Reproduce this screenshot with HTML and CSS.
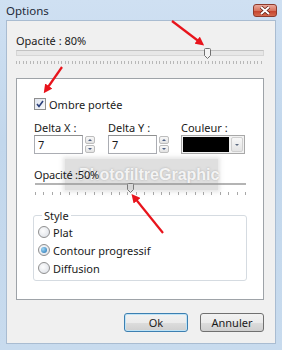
FILE: index.html
```html
<!DOCTYPE html>
<html lang="fr">
<head>
    <meta charset="UTF-8">
    <title>Options</title>
    <link rel="stylesheet" href="styles.css">
</head>
<body>
    <div class="window">
        <div class="titlebar">
            <span class="title">Options</span>
            <div class="close">
                <svg width="12" height="9" viewBox="0 0 12 9"><path d="M2 1 L10 8 M10 1 L2 8" stroke="#5a1a10" stroke-width="3.4"/><path d="M2 1 L10 8 M10 1 L2 8" stroke="#fff" stroke-width="2"/></svg>
            </div>
        </div>

        <div class="client">
            <div class="label">Opacité : 80%</div>
            <div class="slider big">
                <div class="track"></div>
                <div class="ticks"></div>
                <svg class="thumb" width="7" height="11" viewBox="0 0 7 11"><path d="M0.5 1.5 Q0.5 0.5 1.5 0.5 H5.5 Q6.5 0.5 6.5 1.5 V7.5 L3.5 10.5 L0.5 7.5 Z" fill="#f4f4f4" stroke="#707070"/></svg>
            </div>

            <div class="panel">
                <label class="check">
                    <span class="box"><svg width="8" height="8" viewBox="0 0 8 8"><path d="M1 4 L3 6.5 L7 1" fill="none" stroke="#2a3f7a" stroke-width="1.6"/></svg></span>
                    Ombre portée
                </label>

                <div class="fields">
                    <div class="field">
                        <div class="flabel">Delta X :</div>
                        <div class="spin">
                            <div class="input">7</div>
                            <div class="arrows">
                                <span class="arr up"></span>
                                <span class="arr down"></span>
                            </div>
                        </div>
                    </div>
                    <div class="field">
                        <div class="flabel">Delta Y :</div>
                        <div class="spin">
                            <div class="input">7</div>
                            <div class="arrows">
                                <span class="arr up"></span>
                                <span class="arr down"></span>
                            </div>
                        </div>
                    </div>
                    <div class="field">
                        <div class="flabel">Couleur :</div>
                        <div class="combo">
                            <span class="swatch"></span>
                            <span class="drop"></span>
                        </div>
                    </div>
                </div>

                <div class="label small">Opacité :50%</div>
                <div class="slider thin">
                    <div class="track"></div>
                    <div class="ticks"></div>
                    <svg class="thumb" width="7" height="10" viewBox="0 0 7 10"><path d="M0.5 1.5 Q0.5 0.5 1.5 0.5 H5.5 Q6.5 0.5 6.5 1.5 V6.5 L3.5 9.5 L0.5 6.5 Z" fill="#f4f4f4" stroke="#707070"/></svg>
                </div>

                <fieldset class="group">
                    <legend>Style</legend>
                    <div class="radio"><span class="dot"></span>Plat</div>
                    <div class="radio"><span class="dot on"></span>Contour progressif</div>
                    <div class="radio"><span class="dot"></span>Diffusion</div>
                </fieldset>
            </div>

            <div class="buttons">
                <div class="btn default">Ok</div>
                <div class="btn">Annuler</div>
            </div>
        </div>

        <div class="watermark">PhotofiltreGraphic</div>

        <svg class="arrows-overlay" width="282" height="350" viewBox="0 0 282 350">
            <defs>
                <marker id="head" markerWidth="4" markerHeight="4" refX="2.2" refY="2" orient="auto">
                    <path d="M0 0 L4 2 L0 4 Z" fill="#e8141c"/>
                </marker>
            </defs>
            <line x1="172" y1="21" x2="201" y2="43" stroke="#e8141c" stroke-width="2.2" marker-end="url(#head)"/>
            <line x1="62" y1="67" x2="46" y2="90" stroke="#e8141c" stroke-width="2.2" marker-end="url(#head)"/>
            <line x1="163" y1="233" x2="134" y2="197" stroke="#e8141c" stroke-width="2.2" marker-end="url(#head)"/>
        </svg>
    </div>
</body>
</html>
```

FILE: styles.css
```css
body {
    margin: 0;
    font-family: "Noto Sans", "DejaVu Sans", sans-serif;
    font-size: 11px;
    color: #1a1a1a;
}
.window {
    position: relative;
    width: 282px;
    height: 350px;
    display: flex;
    flex-direction: column;
    background: linear-gradient(#cfe0f2, #c2d7ec 40%, #c8dbee);
    overflow: hidden;
}
.titlebar {
    height: 20px;
    display: flex;
    align-items: center;
    justify-content: space-between;
    padding: 0 5px 0 6px;
}
.title {
    font-size: 11.5px;
    color: #1e2a38;
}
.close {
    width: 24px;
    height: 13px;
    box-sizing: border-box;
    border: 1px solid #8c3a2c;
    border-radius: 3px;
    background: linear-gradient(#eaa99c, #d8755f 50%, #c4402a 51%, #d46a4e);
    display: flex;
    align-items: center;
    justify-content: center;
}
.client {
    flex: 1;
    margin: 0 6px 6px;
    background: #f0f0f0;
    border: 1px solid #a9bcd1;
    padding: 12px 11px 0 9px;
    display: flex;
    flex-direction: column;
}
.label {
    height: 15px;
    line-height: 15px;
}
.slider {
    position: relative;
}
.slider.big {
    height: 18px;
}
.big .track {
    margin-top: 2px;
    height: 6px;
    box-sizing: border-box;
    background: #e7e7e7;
    border: 1px solid #d6d6d6;
    border-top-color: #c2c2c2;
}
.big .ticks {
    margin-top: 5px;
    height: 3px;
    background: repeating-linear-gradient(to right, #b8b8b8 0 1px, transparent 1px 3.5px);
}
.thumb {
    position: absolute;
    top: 0;
}
.big .thumb {
    left: 188px;
}
.panel {
    margin-top: 12px;
    height: 222px;
    box-sizing: border-box;
    background: #fff;
    border: 1px solid #9ea3a8;
    padding: 19px 0 0 17px;
}
.check {
    display: flex;
    align-items: center;
    gap: 3px;
    height: 12px;
}
.box {
    width: 12px;
    height: 12px;
    box-sizing: border-box;
    border: 1px solid #8f8f8f;
    background: linear-gradient(135deg, #dfe4ee, #f8f9fb);
    display: flex;
    align-items: center;
    justify-content: center;
}
.fields {
    display: flex;
    margin-top: 10px;
}
.field {
    width: 74px;
}
.field:nth-child(2) {
    width: 73px;
}
.flabel {
    height: 15px;
    line-height: 15px;
}
.spin {
    display: flex;
    gap: 2px;
}
.input {
    width: 49px;
    height: 19px;
    box-sizing: border-box;
    border: 1px solid #abadb3;
    border-top-color: #8e8f8f;
    padding-left: 3px;
    line-height: 17px;
}
.arrows {
    display: flex;
    flex-direction: column;
    gap: 1px;
    padding-top: 1px;
}
.arr {
    width: 10px;
    height: 8px;
    box-sizing: border-box;
    border: 1px solid #bdbdbd;
    border-radius: 2px;
    background: linear-gradient(#f8f8f8, #e2e2e2);
    position: relative;
}
.arr::after {
    content: "";
    position: absolute;
    left: 2px;
    top: 2px;
    border-left: 2px solid transparent;
    border-right: 2px solid transparent;
}
.up::after {
    border-bottom: 2px solid #4d6185;
}
.down::after {
    border-top: 2px solid #4d6185;
}
.combo {
    width: 64px;
    height: 19px;
    box-sizing: border-box;
    border: 1px solid #a8a8a8;
    padding: 1px;
    display: flex;
    gap: 2px;
    background: #f2f2f2;
}
.swatch {
    flex: 1;
    background: #000;
}
.drop {
    width: 12px;
    box-sizing: border-box;
    border: 1px solid #cfcfcf;
    border-radius: 2px;
    background: linear-gradient(#f7f7f7, #e4e4e4);
    position: relative;
}
.drop::after {
    content: "";
    position: absolute;
    left: 3px;
    top: 6px;
    border-left: 2px solid transparent;
    border-right: 2px solid transparent;
    border-top: 2px solid #5c6a80;
}
.label.small {
    margin-top: 13px;
    position: relative;
    z-index: 2;
    letter-spacing: -0.2px;
}
.slider.thin {
    height: 14px;
    width: 211px;
    margin-left: 1px;
}
.thin .track {
    margin-top: 1px;
    height: 2px;
    background: #b4b4b4;
    border-bottom: 1px solid #fff;
}
.thin .ticks {
    margin-top: 6px;
    height: 3px;
    background: repeating-linear-gradient(to right, #a8a8a8 0 1px, transparent 1px 8.4px);
}
.thin .thumb {
    left: 92px;
}
.group {
    margin: 11px 0 0 -1px;
    width: 214px;
    box-sizing: border-box;
    border: 1px solid #d5dbe1;
    border-radius: 3px;
    padding: 0 0 3px 4px;
}
.group legend {
    padding: 0 2px;
    margin-left: 4px;
    line-height: 15px;
}
.radio {
    height: 18px;
    display: flex;
    align-items: center;
    gap: 3px;
}
.dot {
    width: 12px;
    height: 12px;
    box-sizing: border-box;
    border-radius: 50%;
    border: 1px solid #8f8f8f;
    background: radial-gradient(circle at 40% 40%, #fdfdfd, #d9dde4);
    position: relative;
}
.dot.on::after {
    content: "";
    position: absolute;
    left: 2px;
    top: 2px;
    width: 6px;
    height: 6px;
    border-radius: 50%;
    background: radial-gradient(circle at 35% 35%, #9fd7f5, #1f6fb0);
}
.buttons {
    margin-top: 13px;
    display: flex;
    justify-content: flex-end;
    gap: 12px;
}
.btn {
    width: 64px;
    height: 19px;
    box-sizing: border-box;
    border: 1px solid #707070;
    border-radius: 3px;
    background: linear-gradient(#f2f2f2, #ebebeb 50%, #dddddd 51%, #cfcfcf);
    text-align: center;
    line-height: 17px;
}
.btn.default {
    border-color: #3c7fb1;
    box-shadow: inset 0 0 0 1px #bfe3f6;
}
.watermark {
    position: absolute;
    z-index: 1;
    left: 65px;
    top: 159px;
    width: 153px;
    height: 31px;
    box-sizing: border-box;
    padding-left: 14px;
    background: rgba(150, 150, 150, 0.3);
    box-shadow: 0 0 4px 2px rgba(150, 150, 150, 0.25);
    color: rgba(255, 255, 255, 0.85);
    font-family: "Liberation Sans", Arial, sans-serif;
    font-weight: bold;
    font-size: 16px;
    line-height: 31px;
    text-shadow: 0 0 2px rgba(120, 120, 120, 0.5);
}
.arrows-overlay {
    position: absolute;
    z-index: 3;
    left: 0;
    top: 0;
    pointer-events: none;
}
```
